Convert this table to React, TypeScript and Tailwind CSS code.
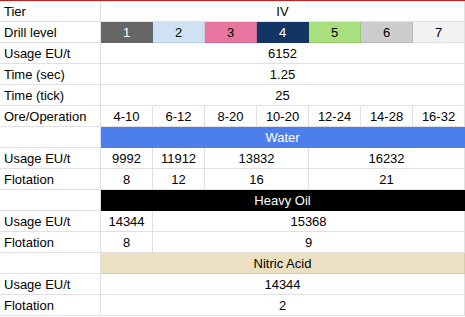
import React from "react";

type Cell = { text: string; span?: number; cls?: string };
type Row = { label: string; cells: Cell[] };

const spanCls: Record<number, string> = {
  1: "col-span-1",
  2: "col-span-2",
  3: "col-span-3",
  6: "col-span-6",
  7: "col-span-7",
};

const drill: Cell[] = [
  { text: "1", cls: "bg-[#666666] border-[#666666] text-white" },
  { text: "2", cls: "bg-[#cfe2f3] border-[#b9cfe2]" },
  { text: "3", cls: "bg-[#e8779f] border-[#d9688f]" },
  { text: "4", cls: "bg-[#123564] border-[#123564] text-white" },
  { text: "5", cls: "bg-[#a9e07d] border-[#97cf6c]" },
  { text: "6", cls: "bg-[#cccccc] border-[#b8b8b8]" },
  { text: "7", cls: "bg-[#f2f2f2] border-[#e0e0e0]" },
];

const rows: Row[] = [
  { label: "Tier", cells: [{ text: "IV", span: 7 }] },
  { label: "Drill level", cells: drill },
  { label: "Usage EU/t", cells: [{ text: "6152", span: 7 }] },
  { label: "Time (sec)", cells: [{ text: "1.25", span: 7 }] },
  { label: "Time (tick)", cells: [{ text: "25", span: 7 }] },
  {
    label: "Ore/Operation",
    cells: ["4-10", "6-12", "8-20", "10-20", "12-24", "14-28", "16-32"].map((t) => ({ text: t })),
  },
  { label: "", cells: [{ text: "Water", span: 7, cls: "bg-[#4d7fec] border-[#4d7fec] text-white" }] },
  {
    label: "Usage EU/t",
    cells: [{ text: "9992" }, { text: "11912" }, { text: "13832", span: 2 }, { text: "16232", span: 3 }],
  },
  {
    label: "Flotation",
    cells: [{ text: "8" }, { text: "12" }, { text: "16", span: 2 }, { text: "21", span: 3 }],
  },
  { label: "", cells: [{ text: "Heavy Oil", span: 7, cls: "bg-black border-black text-white" }] },
  { label: "Usage EU/t", cells: [{ text: "14344" }, { text: "15368", span: 6 }] },
  { label: "Flotation", cells: [{ text: "8" }, { text: "9", span: 6 }] },
  { label: "", cells: [{ text: "Nitric Acid", span: 7, cls: "bg-[#ebe0c2] border-[#d9ccaa]" }] },
  { label: "Usage EU/t", cells: [{ text: "14344", span: 7 }] },
  { label: "Flotation", cells: [{ text: "2", span: 7 }] },
];

export default function App() {
  return (
    <div
      className="w-[465px] h-[317px] bg-white text-black text-[13px] leading-none border-t border-[#c81e1e]"
      style={{ fontFamily: '"Liberation Sans", Arial, sans-serif' }}
    >
      <div className="grid grid-cols-[101px_repeat(7,52px)] auto-rows-[21px]">
        {rows.map((row, i) => (
          <React.Fragment key={i}>
            <div className="flex items-center pl-[4px] border-r border-b border-[#e0e0e0]">{row.label}</div>
            {row.cells.map((c, j) => (
              <div
                key={j}
                className={
                  "flex items-center justify-center border-r border-b " +
                  spanCls[c.span ?? 1] +
                  " " +
                  (c.cls ?? "border-[#e0e0e0]")
                }
              >
                {c.text}
              </div>
            ))}
          </React.Fragment>
        ))}
      </div>
    </div>
  );
}
